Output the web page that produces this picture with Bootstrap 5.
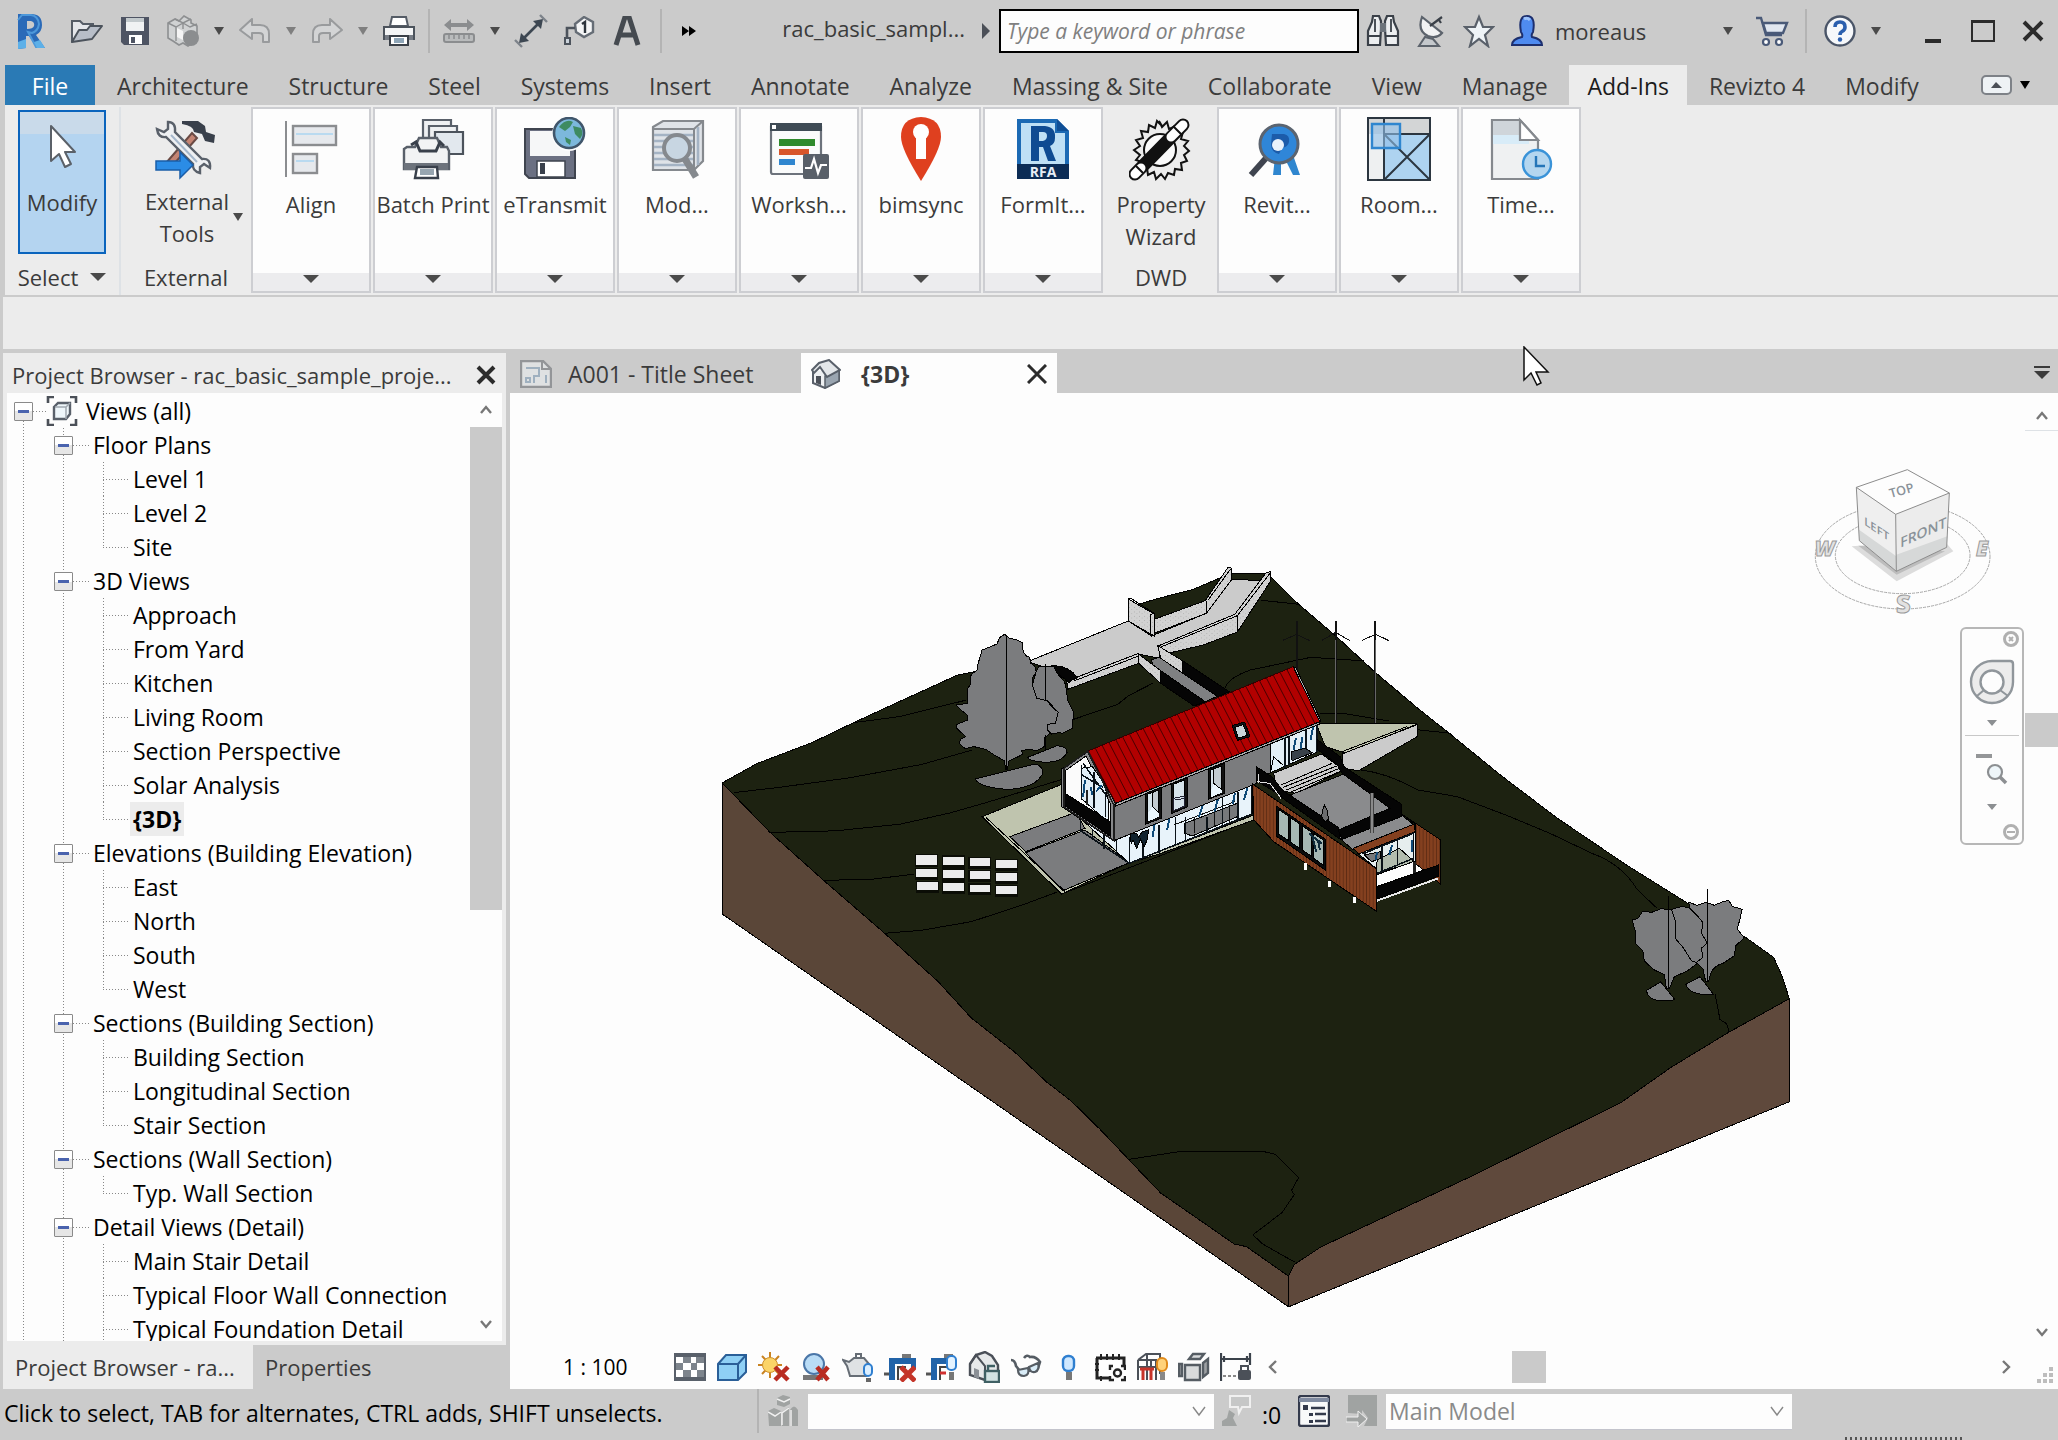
<!DOCTYPE html>
<html lang="en">
<head>
<meta charset="utf-8">
<meta name="viewport" content="width=device-width, initial-scale=1">
<title>rac_basic_sample_project - {3D}</title>
<link href="https://cdn.jsdelivr.net/npm/bootstrap@5.3.0/dist/css/bootstrap.min.css" rel="stylesheet">
<style>
:root{--chrome:#cbcbcb;--panel:#ececec;--paper:#fdfdfd;--ink:#3b3b3b;--edge:#cdced2}
body{font-family:"Open Sans","Noto Sans",sans-serif;font-size:22px;line-height:32px;color:var(--ink);background:var(--chrome)}
button{color:inherit;background:none;border:0;padding:0;font:inherit}
svg{display:block;flex:none}
.titlebar,.tabs,.ribbon,.options,.status,.bhead,.btabs,.doctabs,.vctl{flex-shrink:0}
.titlebar{height:65px;padding-bottom:4px}
.tool{width:48px;height:47px;display:flex;align-items:center;justify-content:center;flex:none}
.tool.drop{width:24px}
.tool.win{width:50px}
.rule{width:12px;height:44px;flex:none;display:flex;justify-content:center}
.rule::before{content:"";width:2px;background:#b4b4b4}
.tri{width:0;height:0;border:5px solid transparent;border-top:8px solid #4a4a4a;border-bottom:0;flex:none}
.tri.pale{border-top-color:#7f7f7f}
.tri.wide{border-width:8px 8px 0}
.docname{padding-bottom:6px}
.search{width:360px;height:44px;border:2px solid #000;border-radius:0;background:var(--paper);padding:0 6px;font-size:21px;flex:none}
.search::placeholder{font-style:italic;color:#808080;opacity:1}
.tabs{height:40px;padding-left:5px}
.tabs a{color:var(--ink);text-decoration:none;padding:0 18px;font-size:23px;line-height:42px;height:40px;white-space:nowrap}
.tabs a.file{background:#2a7ab5;color:#fff;padding:0;width:90px;text-align:center}
.tabs a.active{background:var(--panel);color:#1b1b1b}
.tabset{margin-right:44px}
.ribbon{height:190px;background:var(--panel);margin-left:5px;padding-top:2px}
.ribbon .plain{display:flex;flex-direction:column;align-items:center;padding-top:10px}
.ribbon .foot{margin-top:auto;height:32px;line-height:32px;display:flex;align-items:center;gap:12px;margin-bottom:2px}
.modbtn{width:88px;height:144px;border:2px solid #0a64bd;background:linear-gradient(#c9daea 22px,#b4d4f0 22px);display:flex;flex-direction:column;align-items:center;padding-top:12px}
.pbox{width:120px;height:186px;border:2px solid var(--edge);background:var(--paper);margin-right:2px;display:flex;flex-direction:column;align-items:center;padding-top:8px;flex:none;white-space:nowrap}
.pbox .lbl,.plain .lbl{line-height:32px;margin-top:7px;text-align:center}
.pbox .strip{margin-top:auto;height:18px;align-self:stretch;background:#ececee;display:flex;justify-content:center;padding-top:2px}
.options{height:54px;background:var(--panel);border-top:2px solid var(--chrome);margin-left:3px}
.workspace{min-height:0;padding-left:3px}
.browser{width:503px;margin:4px 4px 0 0;flex:none}
.bhead{height:40px;background:var(--panel);padding:4px 10px 0 9px}
.bbody{background:var(--panel);padding:0 4px 4px;min-height:0}
.tree{background:var(--paper);margin:0;padding:1px 0 0;color:#000;font-size:23px;line-height:34px;white-space:nowrap;overflow:hidden;
 background-image:repeating-linear-gradient(#888 0 1px,transparent 1px 3px),repeating-linear-gradient(#888 0 1px,transparent 1px 3px);
 background-size:1px 100%;background-repeat:no-repeat;background-position:16px 28px,56px 35px}
.tree ul{list-style:none;margin:0;padding:0}
.node{display:flex;align-items:center;height:34px}
.twist{width:19px;height:19px;border:1px solid #8a8a8a;border-radius:1px;background:linear-gradient(#fff 50%,#e6e6e6 50%);display:flex;align-items:center;justify-content:center;flex:none}
.twist::before{content:"";width:11px;height:3px;background:#4a63ae}
.dots{height:1px;background:repeating-linear-gradient(90deg,#888 0 1px,transparent 1px 3px);flex:none}
.grp>.node .twist{margin-left:47px}
.grp>.node .dots{width:17px;margin-right:3px}
.top>.twist{margin-left:7px}
.top>.dots{width:13px}
.leaf{height:34px;display:flex;align-items:center;background:repeating-linear-gradient(#888 0 1px,transparent 1px 3px) 96px 0/1px 100% no-repeat}
.leaf::before{content:"";width:27px;height:1px;margin-left:96px;flex:none;background:repeating-linear-gradient(90deg,#888 0 1px,transparent 1px 3px)}
.leaf span{padding:0 3px}
.leaf:last-child:not(.more){background-size:1px 50%}
.leaf.cur span{background:var(--panel);font-weight:700}
.sbar{width:32px;background:var(--paper);flex:none}
.sbar .cap{height:34px;display:flex;align-items:center;justify-content:center;flex:none}
.thumb{background:#cacaca;border:0}
.btabs{height:44px}
.btabs button{padding:0 12px;line-height:42px}
.btabs .active{background:var(--panel);width:250px;text-align:left}
.doctabs{height:44px;padding-top:4px}
.doctab{height:40px;display:flex;align-items:center;padding:2px 10px 0;font-size:23px}
.doctab.active{background:var(--paper);width:256px;font-weight:700}
.canvas{background:var(--paper);min-height:0}
.stage{min-width:0}
.stage>.model{position:absolute;inset:0;width:100%;height:100%}
.cube{position:absolute;right:31px;top:75px}
.navbox{position:absolute;right:1px;top:234px}
.vbar{width:33px;flex:none;padding-bottom:4px}
.vctl{height:48px;padding:4px 5px 0 53px;color:#000;font-size:21px}
.vctl .scale{width:111px}
.status{height:51px;color:#000;font-size:23px;padding-bottom:7px}
.status .form-select{height:35px;border:0;border-radius:0;padding:0 32px 0 3px;font-size:23px;line-height:34px;color:#8a8a8a;background-color:var(--paper);background-size:16px 12px;background-position:right 7px center;box-shadow:0 1px 0 #c3c4cc;
 background-image:url("data:image/svg+xml,%3Csvg xmlns='http://www.w3.org/2000/svg' viewBox='0 0 16 12'%3E%3Cpath d='M2 2l6 8 6-8' fill='none' stroke='%23888' stroke-width='1.4'/%3E%3C/svg%3E")}
.grip{width:118px;height:3px;background:repeating-linear-gradient(90deg,#555 0 2px,transparent 2px 5px);position:absolute;right:95px;bottom:0}
.pointer{position:absolute;left:1523px;top:346px;z-index:5}
.thin *{vector-effect:non-scaling-stroke}
</style>
</head>
<body class="vh-100 d-flex flex-column overflow-hidden position-relative">

<header class="titlebar d-flex align-items-center">
  <div class="d-flex align-items-center">
    <a href="#" class="tool ms-0" aria-label="Revit" style="width:63px"><svg width="32" height="38" viewBox="0 0 32 38"><path d="M2 2h13q11 0 11 11 0 7-6 10l9 13h-8L13 24h-3v12l-8 1z" fill="#2a6ab8"/><path d="M2 8l4-5h9q7 1 8 9-1 7-7 9l-4-1 8 15h6" fill="none" stroke="#4d98da" stroke-width="2"/><path d="M11 9h4q4 1 3 5-1 3-7 3z" fill="#cbcbcb"/><path d="M2 30l8-3v9l-8 1zM18 30l6-2 5 8h-8z" fill="#5db0e8"/></svg></a>
    <button class="tool" aria-label="Open"><svg width="34" height="28" viewBox="0 0 34 28"><path d="M2 25V4h8l3 3h10v5" fill="#e4e6ea" stroke="#555c66" stroke-width="2"/><path d="M2 25l7-12h8l3-4h12L22 22z" fill="#b8bec8" stroke="#4c535c" stroke-width="2" stroke-linejoin="round"/></svg></button>
    <button class="tool" aria-label="Save"><svg width="30" height="30" viewBox="0 0 30 30"><path d="M1 1h28v28H4l-3-3z" fill="#4e5463"/><path d="M6 2h18v13H6z" fill="#f0f2f3"/><path d="M6 2h18v4H6z" fill="#c3cacd"/><path d="M9 19h13v9H9z" fill="#fff"/><path d="M11 21h4v6h-4z" fill="#4e5463"/></svg></button>
    <button class="tool" aria-label="Synchronize"><svg width="34" height="34" viewBox="0 0 34 34"><path d="M2 9l7-4 4 2 5-5 7 4v3l6 3v14l-9 6-5-3-4 2-6-4-5-3z" fill="#d0d2d3" stroke="#8d8f91" stroke-width="1.600"/><path d="M2 9l8 4 7-4 7 4 7-3M10 13v14M17 9v6M9 5l8 4 8-4" fill="none" stroke="#8d8f91" stroke-width="1.400"/><path d="M11 14l6 3v9l-6-3z" fill="#f4f4f4"/><circle cx="25" cy="24" r="8" fill="#8b8d8f"/></svg></button>
    <button class="tool drop" aria-label="Sync options"><i class="tri"></i></button>
    <button class="tool" aria-label="Undo"><svg width="32" height="26" viewBox="0 0 32 26"><path d="M1 12L13 1v6h8q9 0 9 9v8h-6v-6q0-3-4-3h-7v6z" fill="#d3d4d5" stroke="#999b9d" stroke-width="2" stroke-linejoin="round"/></svg></button>
    <button class="tool drop" aria-label="Undo list"><i class="tri pale"></i></button>
    <button class="tool" aria-label="Redo"><svg width="32" height="26" viewBox="0 0 32 26"><path d="M31 12L19 1v6h-8q-9 0-9 9v8h6v-6q0-3 4-3h7v6z" fill="#d3d4d5" stroke="#999b9d" stroke-width="2" stroke-linejoin="round"/></svg></button>
    <button class="tool drop" aria-label="Redo list"><i class="tri pale"></i></button>
    <button class="tool" aria-label="Print"><svg width="34" height="32" viewBox="0 0 34 32"><path d="M8 11l2-9h14l2 9z" fill="#fff" stroke="#555c66" stroke-width="2"/><path d="M2 12h30v12H2z" fill="#f4f5f6" stroke="#4c535c" stroke-width="2"/><path d="M3 20h28v5H3z" fill="#777d86"/><path d="M8 21h18v9H8z" fill="#fff" stroke="#3a4048" stroke-width="2"/><path d="M12 23h10v5H12z" fill="#8fa6b8"/></svg></button>
    <span class="rule"></span>
    <button class="tool" aria-label="Measure"><svg width="34" height="26" viewBox="0 0 34 26"><path d="M2 7l7-6v4h16V1l7 6-7 6V9H9v4z" fill="#8b8d8f"/><rect x="2" y="16" width="30" height="8" rx="2" fill="#b9bbbc" stroke="#8b8d8f" stroke-width="2"/><path d="M7 17v4M12 17v4M17 17v4M22 17v4M27 17v4" stroke="#8b8d8f" stroke-width="1.500"/></svg></button>
    <button class="tool drop" aria-label="Measure options"><i class="tri"></i></button>
    <button class="tool" aria-label="Aligned dimension"><svg width="34" height="34" viewBox="0 0 34 34"><path d="M8 26L26 8" stroke="#3d4752" stroke-width="2.600"/><path d="M5 29l2-10 8 8zM29 5l-2 10-8-8z" fill="#3d4752"/><path d="M1 26l7 7M26 1l7 7" stroke="#7d838a" stroke-width="2.400"/></svg></button>
    <button class="tool" aria-label="Tag by category"><svg width="32" height="30" viewBox="0 0 32 30"><path d="M12 8l9-7 9 5v10l-9 5-8-5z" fill="#f4f5f6" stroke="#666d76" stroke-width="2.400"/><path d="M12 12H4v11" fill="none" stroke="#4c535c" stroke-width="2.600"/><rect x="2" y="22" width="5" height="6" fill="#cbd3db" stroke="#4c535c" stroke-width="2"/><path d="M19 8l3-2v11" fill="none" stroke="#2d343c" stroke-width="2.400"/></svg></button>
    <button class="tool" aria-label="Text"><svg width="28" height="30" viewBox="0 0 28 30"><path d="M3 29L12 1h4l9 28M7 19h14" fill="none" stroke="#454a50" stroke-width="5"/></svg></button>
    <span class="rule ms-1 me-1"></span>
    <button class="tool" aria-label="More tools" style="width:36px"><svg width="16" height="12" viewBox="0 0 16 12"><path d="M1 1l7 5-7 5zM8 1l7 5-7 5z" fill="#000"/></svg></button>
  </div>
  <div class="flex-grow-1 d-flex align-items-center justify-content-end gap-3 pe-2 text-nowrap">
    <span class="docname">rac_basic_sampl...</span>
    <svg width="10" height="18" viewBox="0 0 10 18"><path d="M1 1l8 8-8 8z" fill="#4b4f57"/></svg>
  </div>
  <input class="search" type="search" placeholder="Type a keyword or phrase" aria-label="Search help">
  <div class="d-flex align-items-center">
    <button class="tool" aria-label="Find"><svg width="34" height="34" viewBox="0 0 34 34"><path d="M7 2h6l2 5v8l-1 16H2V17L6 8zM21 2h6l1 6 4 9v14H20l-1-16V7z" fill="#eceef0" stroke="#3a4048" stroke-width="2.200"/><path d="M14 9h6v9h-6z" fill="#6c737b"/><path d="M2 22h12M20 22h12M9 5v13M25 5v13" stroke="#3a4048" stroke-width="1.800"/></svg></button>
    <button class="tool" aria-label="Communication"><svg width="30" height="34" viewBox="0 0 30 34"><path d="M6 3q-5 14 6 19 9 3 14-3z" fill="#f1f2f3" stroke="#5c636c" stroke-width="2.200"/><path d="M14 12L26 3M23 6l2 3" stroke="#3a4048" stroke-width="2.200"/><path d="M3 32l6-9 8 2 6 7z" fill="#c4c8cc" stroke="#5c636c" stroke-width="2"/></svg></button>
    <button class="tool" aria-label="Favorites"><svg width="32" height="34" viewBox="0 0 32 34"><path d="M16 3l4 10h10l-8 8 3 11-9-7-9 7 3-11-8-8h10z" fill="#eef3f7" stroke="#59606a" stroke-width="2.200"/></svg></button>
    <button class="tool" aria-label="Account"><svg width="34" height="34" viewBox="0 0 34 34"><path d="M2 31q0-6 10-8 1-2-1-5-3-16 6-16t6 16q-2 3-1 5 10 2 10 8z" fill="#4f8bf0" stroke="#1d2f6e" stroke-width="2"/><path d="M14 5q3-2 6 1" stroke="#9dc3fb" stroke-width="3" fill="none"/></svg></button>
    <button class="d-flex align-items-center" style="width:189px"><span class="flex-grow-1 text-start ps-1">moreaus</span><span class="tool drop"><i class="tri"></i></span></button>
    <button class="tool ms-2" aria-label="App Store"><svg width="34" height="34" viewBox="0 0 34 34"><path d="M1 4h5l5 17h16" fill="none" stroke="#4a5a78" stroke-width="2.400"/><path d="M8 9h24l-4 10H11z" fill="#e1e7f0" stroke="#4a5a78" stroke-width="2.400"/><circle cx="11" cy="28" r="3" fill="#fff" stroke="#4a5a78" stroke-width="2.200"/><circle cx="24" cy="28" r="3" fill="#fff" stroke="#4a5a78" stroke-width="2.200"/></svg></button>
    <span class="rule ms-1"></span>
    <button class="tool ms-1" aria-label="Help"><svg width="34" height="34" viewBox="0 0 34 34"><circle cx="17" cy="17" r="14.500" fill="#f6f8fb" stroke="#4a5568" stroke-width="2.400"/><path d="M12 13q0-5 5-5t5 5q0 3-3 4.500-2 1-2 3.500" fill="none" stroke="#2b5fae" stroke-width="3.600"/><circle cx="17" cy="25.500" r="2.200" fill="#2b5fae"/></svg></button>
    <button class="tool drop me-1" aria-label="Help options"><i class="tri"></i></button>
    <button class="tool win ms-3" aria-label="Minimize"><svg width="16" height="30" viewBox="0 0 16 30"><path d="M0 23h16v4H0z" fill="#2b2b2b"/></svg></button>
    <button class="tool win" aria-label="Maximize"><svg width="24" height="24" viewBox="0 0 24 24"><path d="M1 2h22v20H1z" fill="none" stroke="#2b2b2b" stroke-width="2"/><path d="M0 1h24v3H0z" fill="#2b2b2b"/></svg></button>
    <button class="tool win" aria-label="Close"><svg width="22" height="22" viewBox="0 0 22 22"><path d="M2 2l18 18M20 2L2 20" stroke="#2b2b2b" stroke-width="4"/></svg></button>
  </div>
</header>

<nav class="tabs d-flex justify-content-between">
  <div class="tabset d-flex flex-grow-1">
    <a href="#" class="file">File</a>
    <div class="flex-grow-1 d-flex justify-content-between ps-1">
      <a href="#">Architecture</a><a href="#">Structure</a><a href="#">Steel</a><a href="#">Systems</a><a href="#">Insert</a><a href="#">Annotate</a><a href="#">Analyze</a><a href="#">Massing &amp; Site</a><a href="#">Collaborate</a><a href="#">View</a><a href="#">Manage</a><a href="#" class="active">Add-Ins</a><a href="#">Revizto 4</a><a href="#">Modify</a>
    </div>
  </div>
  <button class="d-flex align-items-center gap-2 pe-4 me-1" aria-label="Ribbon display"><svg width="31" height="20" viewBox="0 0 31 20"><rect x="1" y="1" width="29" height="18" rx="4" fill="#eef2f5" stroke="#7d8187" stroke-width="2"/><path d="M10 13l5-6 6 6z" fill="#4b4f57"/></svg><i class="tri" style="border-top-color:#000"></i></button>
</nav>

<section class="ribbon d-flex">
  <div class="plain" style="width:114px;padding-top:3px">
    <button class="modbtn"><svg width="64" height="46" viewBox="0 0 64 46"><path d="M21 2v35l8-7 6 13 6-3-6-12h10z" fill="#fff" stroke="#5b6169" stroke-width="2" stroke-linejoin="round"/></svg><span class="lbl mt-3">Modify</span></button>
    <button class="foot">Select <i class="tri wide"></i></button>
  </div>
  <div class="plain border-start border-2" style="width:132px">
    <svg width="64" height="64" viewBox="0 0 64 64"><path d="M12 46L38 16l5 5-24 27z" fill="#c48473" stroke="#6a4a44" stroke-width="2"/><path d="M28 4h16l7 5 1 6 9 3-1 8-9-2-3-7-8-2q0-6-12-8z" fill="#39404b"/><path d="M3 12l7 3 4-3V5q8 0 7 10l27 27q9-1 8 9l-6-4-4 3v6q-8-2-7-9L12 20q-8 1-9-8z" fill="#eef0f3" stroke="#59606a" stroke-width="2.400"/><path d="M17 18l26 27" stroke="#a6b8cc" stroke-width="2"/><path d="M2 44h24v-9l13 13-13 13v-8H2z" fill="#2b8ce6" stroke="#1a5da8" stroke-width="1.500"/></svg>
    <div class="d-flex align-items-center gap-1"><span class="lbl mt-1 ps-2 ms-2">External<br>Tools</span><i class="tri mt-1"></i></div>
    <div class="foot">External</div>
  </div>
  <button class="pbox"><svg width="64" height="64" viewBox="0 0 64 64"><path d="M7 4v56" stroke="#8b8d90" stroke-width="2"/><rect x="14" y="9" width="43" height="19" fill="#e6e9ed" stroke="#8b8d90" stroke-width="2.400"/><path d="M17 17h37" stroke="#b9daf0" stroke-width="2"/><rect x="14" y="37" width="24" height="19" fill="#e6e9ed" stroke="#8b8d90" stroke-width="2.400"/><path d="M17 44h18" stroke="#b9daf0" stroke-width="2"/></svg><span class="lbl">Align</span><span class="strip"><i class="tri wide"></i></span></button>
  <button class="pbox"><svg width="64" height="64" viewBox="0 0 64 64"><path d="M22 3h28v20H22z" fill="#eef0f2" stroke="#59606a" stroke-width="2.200"/><path d="M28 9h28v22H28z" fill="#eef0f2" stroke="#59606a" stroke-width="2.200"/><path d="M34 15h28v22H34z" fill="#e2e8ee" stroke="#4c535c" stroke-width="2.200"/><path d="M3 32l3-2h8l4-9h18l4 9h6l2 4v18H3z" fill="#f2f3f4" stroke="#59606a" stroke-width="2.400"/><path d="M10 28l5-3 4 9h16l4-9 4 4" fill="none" stroke="#39404b" stroke-width="3"/><path d="M3 46h44v7H3z" fill="#6d737c"/><path d="M16 50h20l1 11H14z" fill="#fff" stroke="#39404b" stroke-width="2.400"/><path d="M19 52h14v6H19z" fill="#97a5b0"/></svg><span class="lbl">Batch Print</span><span class="strip"><i class="tri wide"></i></span></button>
  <button class="pbox"><svg width="64" height="64" viewBox="0 0 64 64"><path d="M2 12h50v49H6l-4-4z" fill="#6b7082" stroke="#3f444f" stroke-width="2"/><path d="M7 14h40v25H7z" fill="#f6f7f8"/><path d="M14 44h28v16H14z" fill="#fff" stroke="#3f444f" stroke-width="1.500"/><path d="M17 46h5v11h-5z" fill="#39404b"/><circle cx="46" cy="17" r="17" fill="#fdfdfd"/><circle cx="46" cy="16" r="15" fill="#7cb8dc" stroke="#40566b" stroke-width="2.600"/><path d="M36 10q7-9 14-5l-3 5-5 4zM50 9l8 2q3 6-1 11l-5-5zM42 20l6 3-1 5-4-3z" fill="#3e8b62"/></svg><span class="lbl">eTransmit</span><span class="strip"><i class="tri wide"></i></span></button>
  <button class="pbox"><svg width="64" height="64" viewBox="0 0 64 64"><path d="M8 10l10-6h40v40l-9 9H8z" fill="#dfe3e8" stroke="#85898e" stroke-width="2.200"/><path d="M8 12h41v40M49 12l9-8" fill="none" stroke="#85898e" stroke-width="2"/><path d="M9 18h39M9 24h39M9 30h39M9 36h39M9 42h39M9 48h39M53 10v38" stroke="#a4b3c4" stroke-width="2.600"/><circle cx="32" cy="31" r="13" fill="#c8d6e2" stroke="#85898e" stroke-width="4"/><path d="M40 42l11 18" stroke="#85898e" stroke-width="7"/></svg><span class="lbl">Mod...</span><span class="strip"><i class="tri wide"></i></span></button>
  <button class="pbox"><svg width="64" height="64" viewBox="0 0 64 64"><rect x="4" y="7" width="50" height="50" rx="2" fill="#fafbfb" stroke="#6d737c" stroke-width="2.200"/><path d="M3 6h52v8H3z" fill="#3f4b55"/><path d="M5 8h4v4H5z" fill="#fff"/><path d="M12 22h36v7H12z" fill="#2f8a2c"/><path d="M12 32h30v6H12z" fill="#d8562b"/><path d="M12 42h16v6H12z" fill="#2f86cf"/><rect x="36" y="37" width="26" height="25" rx="2" fill="#596069"/><path d="M38 51h6l3-9 4 14 3-8h6" fill="none" stroke="#fff" stroke-width="2.200"/></svg><span class="lbl">Worksh...</span><span class="strip"><i class="tri wide"></i></span></button>
  <button class="pbox"><svg width="64" height="64" viewBox="0 0 64 64"><path d="M32 0q20 1 20 20 0 12-20 44Q12 32 12 20 12 1 32 0z" fill="#df401f"/><circle cx="32" cy="15" r="8" fill="#fff"/><path d="M27 17h10v25H27z" fill="#fff"/></svg><span class="lbl">bimsync</span><span class="strip"><i class="tri wide"></i></span></button>
  <button class="pbox"><svg width="64" height="64" viewBox="0 0 64 64"><path d="M6 2h40l12 12v48H6z" fill="#1c6ab4"/><path d="M10 6h34v10h10v31H10z" fill="#bfe0f5"/><path d="M46 2l12 12H46z" fill="#0f4f96"/><path d="M20 9h14q11 1 10 12 0 6-5 8l6 15h-8l-5-14h-4v14h-8zM28 15v9h4q4-1 4-5t-4-4z" fill="#0f4b92" fill-rule="evenodd"/><path d="M6 47h52v15H6z" fill="#0c2c55"/><text x="32" y="60" text-anchor="middle" font-size="14" font-weight="700" fill="#e7eef6">RFA</text></svg><span class="lbl">FormIt...</span><span class="strip"><i class="tri wide"></i></span></button>
  <div class="plain" style="width:112px">
    <svg width="64" height="64" viewBox="0 0 64 64"><path d="M30 4l3 6 5-5 2 7 7-3v7l7-1-2 7 7 2-4 5 5 5-5 4 3 6-6 2 1 7-7-1-1 6-6-2-3 6-4-5-5 5-2-7-6 3-1-7-7 1 2-7-6-2 4-5-6-5 6-4-4-6 7-2-2-7 7 1 1-7 6 3 2-7 5 5z" fill="#ececec" stroke="#111" stroke-width="2"/><circle cx="31" cy="33" r="16" fill="#fafafa" stroke="#111" stroke-width="2"/><path d="M6 57L54 8" stroke="#111" stroke-width="13" stroke-linecap="round"/><path d="M6 57l6-6M42 20L54 8" stroke="#fff" stroke-width="9" stroke-linecap="round"/><path d="M44 9l9 9M7 49l7 7" stroke="#111" stroke-width="2"/></svg>
    <span class="lbl">Property<br>Wizard</span>
    <div class="foot">DWD</div>
  </div>
  <button class="pbox"><svg width="64" height="64" viewBox="0 0 64 64"><path d="M22 40L6 58" stroke="#3f444f" stroke-width="6"/><path d="M30 40l-2 18h8V42zM40 42l8 16h7L48 38z" fill="#2f86cf"/><circle cx="34" cy="27" r="19" fill="#2f86d8" stroke="#5b6470" stroke-width="3"/><path d="M27 17h12q6 1 5 8-1 5-7 6l-3 6q-8-2-8-10z" fill="#1c5caa"/><circle cx="33" cy="28" r="6" fill="#e8f2fb"/></svg><span class="lbl">Revit...</span><span class="strip"><i class="tri wide"></i></span></button>
  <button class="pbox"><svg width="64" height="64" viewBox="0 0 64 64"><path d="M1 1h62v62H1z" fill="#eef0f1"/><path d="M1 1h62v16H1z" fill="#d3d5d6"/><path d="M17 17h46v46H17z" fill="#aed3f0"/><path d="M1 1h62v62H1zM17 1v62M17 17h46L17 63M17 17l46 46" fill="none" stroke="#2c3640" stroke-width="2"/><path d="M5 7h28v24H5z" fill="#8fc0ea99" stroke="#2f86cf" stroke-width="2.400"/></svg><span class="lbl">Room...</span><span class="strip"><i class="tri wide"></i></span></button>
  <button class="pbox"><svg width="64" height="64" viewBox="0 0 64 64"><path d="M3 3h28l18 20v39H3z" fill="#eff1f2" stroke="#85898e" stroke-width="2.200"/><path d="M4 4h27v14H4z" fill="#cfd5da"/><path d="M4 18h36v9H4z" fill="#d8ecf8"/><path d="M31 3v20h18z" fill="#fff" stroke="#85898e" stroke-width="2.200"/><circle cx="48" cy="47" r="14" fill="#b4d6ef" stroke="#3a93d8" stroke-width="2.400"/><path d="M47 39v10h9" fill="none" stroke="#2475b8" stroke-width="2.400"/></svg><span class="lbl">Time...</span><span class="strip"><i class="tri wide"></i></span></button>
</section>
<div class="options"></div>

<main class="workspace flex-grow-1 d-flex">
  <aside class="browser d-flex flex-column">
    <div class="bhead d-flex align-items-center justify-content-between text-nowrap"><span>Project Browser - rac_basic_sample_proje...</span><button aria-label="Close browser"><svg width="20" height="20" viewBox="0 0 20 20"><path d="M2 2l16 16M18 2L2 18" stroke="#2b2b2b" stroke-width="4"/></svg></button></div>
    <div class="bbody flex-grow-1 d-flex overflow-hidden">
      <ul class="tree list-unstyled flex-grow-1">
        <li>
          <div class="node top"><button class="twist" aria-label="Collapse"></button><i class="dots"></i><svg class="me-2" width="32" height="30" viewBox="0 0 32 30"><path d="M2 7V1h6M24 1h6v6M2 23v6h6M24 29h6v-6" fill="none" stroke="#4b5058" stroke-width="2.600"/><path d="M8 11l4-4h12v11l-4 5H8z" fill="#eef6fa" stroke="#59606a" stroke-width="2.400"/><path d="M20 11v12M9 11h11l4-4" fill="none" stroke="#a0a8b0" stroke-width="1.500"/></svg><span>Views (all)</span></div>
          <ul>
            <li class="grp"><div class="node"><button class="twist" aria-label="Collapse"></button><i class="dots"></i><span>Floor Plans</span></div>
              <ul><li class="leaf"><span>Level 1</span></li><li class="leaf"><span>Level 2</span></li><li class="leaf"><span>Site</span></li></ul></li>
            <li class="grp"><div class="node"><button class="twist" aria-label="Collapse"></button><i class="dots"></i><span>3D Views</span></div>
              <ul><li class="leaf"><span>Approach</span></li><li class="leaf"><span>From Yard</span></li><li class="leaf"><span>Kitchen</span></li><li class="leaf"><span>Living Room</span></li><li class="leaf"><span>Section Perspective</span></li><li class="leaf"><span>Solar Analysis</span></li><li class="leaf cur"><span>{3D}</span></li></ul></li>
            <li class="grp"><div class="node"><button class="twist" aria-label="Collapse"></button><i class="dots"></i><span>Elevations (Building Elevation)</span></div>
              <ul><li class="leaf"><span>East</span></li><li class="leaf"><span>North</span></li><li class="leaf"><span>South</span></li><li class="leaf"><span>West</span></li></ul></li>
            <li class="grp"><div class="node"><button class="twist" aria-label="Collapse"></button><i class="dots"></i><span>Sections (Building Section)</span></div>
              <ul><li class="leaf"><span>Building Section</span></li><li class="leaf"><span>Longitudinal Section</span></li><li class="leaf"><span>Stair Section</span></li></ul></li>
            <li class="grp"><div class="node"><button class="twist" aria-label="Collapse"></button><i class="dots"></i><span>Sections (Wall Section)</span></div>
              <ul><li class="leaf"><span>Typ. Wall Section</span></li></ul></li>
            <li class="grp"><div class="node"><button class="twist" aria-label="Collapse"></button><i class="dots"></i><span>Detail Views (Detail)</span></div>
              <ul><li class="leaf"><span>Main Stair Detail</span></li><li class="leaf"><span>Typical Floor Wall Connection</span></li><li class="leaf more"><span>Typical Foundation Detail</span></li></ul></li>
          </ul>
        </li>
      </ul>
      <div class="sbar d-flex flex-column">
        <span class="cap"><svg width="12" height="10" viewBox="0 0 12 10"><path d="M1 8l5-6 5 6" fill="none" stroke="#777" stroke-width="2.400"/></svg></span>
        <div class="thumb" style="height:51%"></div>
        <span class="cap mt-auto"><svg width="12" height="10" viewBox="0 0 12 10"><path d="M1 2l5 6 5-6" fill="none" stroke="#777" stroke-width="2.400"/></svg></span>
      </div>
    </div>
    <div class="btabs d-flex text-nowrap"><button class="active">Project Browser - ra...</button><button>Properties</button></div>
  </aside>

  <section class="flex-grow-1 d-flex flex-column stage">
    <div class="doctabs d-flex align-items-center">
      <button class="doctab text-nowrap" style="width:291px"><svg width="32" height="28" viewBox="0 0 32 28"><path d="M1 1h22l8 8v18H1z" fill="#dfe1e2" stroke="#939598" stroke-width="2.400"/><path d="M6 8h13v8h-5v7M6 18h4v4H6zM26 15v8" fill="none" stroke="#9fb0bf" stroke-width="2"/><path d="M22 1v8h9" fill="none" stroke="#939598" stroke-width="2"/></svg><span class="ps-3">A001 - Title Sheet</span></button>
      <button class="doctab active"><svg width="30" height="30" viewBox="0 0 30 30"><path d="M2 12v12l12 5 14-7V11" fill="#eef0f2" stroke="#59606a" stroke-width="2"/><path d="M14 29V17l14-6v11z" fill="#9aa5b0" stroke="#59606a" stroke-width="1.500"/><path d="M1 11L8 4l10-3 11 10-13 7-7-10-6 6z" fill="#e3e6e9" stroke="#59606a" stroke-width="2"/><path d="M5 17h5v9l-5-2z" fill="#4b5058"/></svg><span class="ps-3 ms-1 flex-grow-1 text-start">{3D}</span><svg width="20" height="20" viewBox="0 0 20 20"><path d="M1 1l18 18M19 1L1 19" stroke="#2b2b2b" stroke-width="3"/></svg></button>
      <button class="ms-auto pe-2" aria-label="Tab list"><svg width="16" height="14" viewBox="0 0 16 14"><path d="M0 0h16v2H0zM0 5h16l-8 8z" fill="#3b3b3b"/></svg></button>
    </div>
    <div class="canvas flex-grow-1 d-flex flex-column">
      <div class="flex-grow-1 d-flex">
        <div class="flex-grow-1 position-relative stage">
<svg class="model thin" viewBox="510 393 1515 948" preserveAspectRatio="xMidYMid meet" shape-rendering="crispEdges" role="img" aria-label="3D site model">
  <defs>
    <pattern id="seam" patternUnits="userSpaceOnUse" width="1" height="1" patternTransform="matrix(18.500 -8.430 75 160 508 603)"><rect width="1" height="1" fill="#b20000"/><rect width=".1" height="1" fill="#4a0000"/></pattern>
    <pattern id="wood" patternUnits="userSpaceOnUse" width="9" height="9"><rect width="9" height="9" fill="#84401f"/><rect width="2" height="9" fill="#5f2c14"/></pattern>
    <pattern id="rail" patternUnits="userSpaceOnUse" width="11" height="11"><rect width="11" height="11" fill="#050505"/><rect x="3" y="2" width="3" height="2" fill="#b9b9b9"/><rect x="8" y="7" width="3" height="2" fill="#888"/></pattern>
    <pattern id="grit" patternUnits="userSpaceOnUse" width="14" height="13"><rect width="14" height="13" fill="#d2d2d2"/><rect x="3" y="2" width="2" height="2" fill="#a8a8a8"/><rect x="10" y="8" width="2" height="2" fill="#b2b2b2"/></pattern>
  </defs>
  <!-- site mass -->
  <g transform="translate(700 540) scale(.7143 .5102)" stroke="#000" stroke-width="1" fill="none">
    <path d="M31 476L98 573 173 667 257 769 333 865 380 937 440 1003 485 1062 520 1100 560 1155 600 1214 645 1280 748 1380 765 1385 824 1443V1503L31 733z" fill="#5a4638"/>
    <path d="M824 1443L832 1420 870 1385 1080 1247 1289 1103 1360 1033 1440 965 1525 899V1101L824 1503z" fill="#5f493c"/>
    <path d="M31 476L80 438 157 397 215 358 280 316 360 265 465 235 600 160 605 130 640 115 690 97 742 66 795 66 835 122 890 188 945 259 1005 330 1050 380 1120 460 1200 545 1296 636 1385 714 1465 780 1503 818 1515 855 1525 899 1440 965 1360 1033 1289 1103 1080 1247 870 1385 832 1420 824 1443 765 1385 748 1380 645 1280 600 1214 560 1155 520 1100 485 1062 440 1003 380 937 333 865 257 769 173 667 98 573z" fill="#1d2211"/>
    <path d="M215 358L280 346 372 314M48 495L110 485 210 466 310 440 380 412M100 573L190 570 280 557 350 535 400 515 505 470M175 667L240 665 300 655M257 771L310 765 380 748 450 716 500 690M522 352L585 322 600 305 635 280M735 290Q740 270 770 255L855 230 930 237M785 118L838 126M868 340L905 341 965 355M1005 372L1052 379M920 450Q960 455 1005 490L1060 503 1130 540 1190 575 1250 615Q1290 635 1312 685L1340 722M600 1214L675 1198 790 1199 805 1204 838 1250 828 1275 832 1283 815 1318 774 1362 788 1380 832 1415M1421 890L1428 940 1437 948 1441 965"/>
    <path d="M1305 745L1313 742 1320 727 1332 730 1345 723 1360 724 1375 718 1386 722 1384 710 1396 716 1408 710 1420 716 1430 710 1440 706 1445 718 1459 724 1455 748 1452 762 1462 780 1450 795 1448 815 1432 830Q1415 835 1412 866H1408L1404 840 1396 830 1382 845 1364 856 1357 880H1353L1350 852 1335 842 1322 825 1320 805 1309 790 1310 770z" fill="#7b7c7e"/>
    <path d="M1360 724L1366 750 1365 780 1377 800 1388 825 1395 828 1404 818 1402 800 1410 790 1402 770 1404 750 1396 736 1386 722M1356 698V880M1411 684V866" />
    <path d="M1325 883L1345 866 1365 901Q1328 910 1325 883zM1380 871L1400 856 1419 891Q1385 893 1380 871z" fill="#7b7c7e"/>
  </g>
  <!-- paths, buildings and trees -->
  <g transform="translate(900 550) scale(.3699 .33333)" stroke="#000" stroke-width="1" fill="none">
    <path d="M345 335L617 213 680 258 828 190 897 88 985 92 905 193 705 287 700 325 645 312 453 405 440 370z" fill="#cbcbcb"/>
    <path d="M617 147L687 192V258L617 213z" fill="url(#grit)"/><path d="M617 147L624 145 687 190 677 194V256"/>
    <path d="M687 208L825 152 887 52 897 55V88L828 190 687 250z" fill="url(#grit)"/><path d="M828 152V190M833 150L893 58"/>
    <path d="M700 287L905 193 990 68 1001 65V95L912 246 820 285 705 315z" fill="url(#grit)"/><path d="M705 291L912 197 1000 70M912 197V246"/>
    <path d="M475 383L645 310V340L453 418V400z" fill="url(#grit)"/><path d="M470 393L645 318"/>
    <path d="M680 330L700 322 885 425 800 468 690 370z" fill="#7f8082"/>
    <path d="M645 312L705 362V400L645 340zM697 287L765 333V370L705 325z" fill="url(#grit)"/>
    <path d="M765 333L890 425 860 440 765 370zM705 362L825 455 795 468 705 400z" fill="url(#rail)"/>
    <path d="M410 347Q455 345 480 383L455 395 425 370z" fill="url(#rail)"/>
    <!-- trees -->
    <path d="M283 253L297 266 312 268 330 278 333 305 342 318 350 322 354 340 364 348 368 365 358 385 360 405 370 415 370 445 398 452 410 470 428 487 424 505 420 522 398 525 400 540 405 550 390 565 390 590 370 602 350 598 328 602 332 612 320 620 295 632 290 660H286L282 632 255 615 232 598 200 590 176 596 160 580 164 568 177 560 166 548 153 535 152 524 165 518 184 510 182 495 165 480 152 465 182 460 183 415 190 405 190 380 198 368 208 362 210 345 222 300 245 290 262 282 270 262z" fill="#7b7c7e"/>
    <path d="M375 350L415 348 425 370 445 395 450 420 453 450 469 485 466 535 440 550 430 548 410 552 398 540 400 523 420 520 428 487 398 452 370 445 358 405 368 365z" fill="#7b7c7e"/>
    <path d="M288 256V660M393 342V452M393 555V605" stroke-width="1.500"/>
    <path d="M203 687L365 642Q390 650 385 672 365 716 288 718 215 712 203 687zM345 622L425 587Q452 590 452 607 440 635 400 637 350 635 345 622z" fill="#7b7c7e"/>
    <!-- turbines -->
    <path d="M1072 213V365M1178 213V522M1285 213V522" stroke="#111" stroke-width="2"/><path d="M1035 271L1072 253 1108 272M1141 271L1178 247 1216 272M1249 271L1286 253 1322 272" stroke="#111"/>
    <path d="M1178 270V522M1285 270V522" stroke="#666"/>
    <!-- triangular terrace -->
    <path d="M1125 522H1398L1205 610 1150 590z" fill="#bfc4ae"/><path d="M1398 524V560L1240 662 1195 655V612z" fill="#cbcbcb"/><path d="M1370 530L1195 605"/>
    <!-- lawn and patio -->
    <path d="M222 800L437 703 620 938 437 1032z" fill="#bfc4ae"/>
    <path d="M297 860L475 787 500 835 340 905z" fill="#7b7c7e"/><path d="M340 908L500 840 620 938 440 1022z" fill="#7b7c7e"/>
    <path d="M232 802L446 1024M437 1032L957 808V795L620 938"/>
    <path d="M618 940L957 795V810L700 912z" fill="#bfc4ae"/>
    <!-- house -->
    <path d="M488 805L620 940 952 792V700L660 800z" fill="#e8f3fa"/>
    <path d="M770 820L912 760V800L790 858 770 850z" fill="#77797b"/>
    <path d="M488 808V842M520 840V870M552 850V898M585 870V915M620 860V940M657 845V925M700 825V908M745 800V887M772 800V875M830 800V848M872 740V830M914 725V812M950 705V795M488 842L620 940 952 792" stroke="#0a1218" stroke-width="1.500"/>
    <path d="M740 825L905 755M795 800V850M850 780V832M890 765V818" stroke="#111"/>
    <path d="M690 810L683 860M730 795L722 840M820 760L808 800M860 745L850 785M940 710L930 750M905 730L900 762" stroke="#0f4a78" stroke-width="2"/>
    <path d="M622 852L640 850 645 862 655 845 672 840 668 870 660 890 650 868 640 895 630 870 625 880z" fill="#10222e"/>
    <path d="M437 657L508 605 583 762 578 872 437 770z" fill="#88898b"/>
    <path d="M447 662L503 618 570 765V835L447 735z" fill="#fbfbfb"/>
    <path d="M490 655L520 650 552 700 565 760V820L490 745z" fill="#e2eff7"/>
    <path d="M490 645V750M524 665V775M556 725V800M492 675L548 712M495 640L560 740" stroke="#0a1218" stroke-width="1.500"/><path d="M500 690L495 740M545 705L530 725M515 710L520 735" stroke="#0f4a78" stroke-width="2"/>
    <path d="M505 720V765" stroke="#222" stroke-width="2"/>
    <path d="M443 728L568 815V858L443 765z" fill="url(#rail)"/>
    <path d="M578 765L1002 575V668L965 690V700L578 872z" fill="#7b7c7e"/>
    <path d="M1002 572L1130 515V605L1002 668z" fill="#e3eff6"/>
    <path d="M508 603L1063 350 1135 515 583 760z" fill="url(#seam)" stroke="#300"/>
    <path d="M583 760L1135 515V522L583 768z" fill="#a9aaac"/><path d="M1063 350L1070 353 1138 512 1135 515z" fill="#a9aaac"/>
    <path d="M508 603L443 655V770L578 872V765L508 605" stroke="#1c1c1c" stroke-width="1.500"/>
    <path d="M898 527L932 516 946 560 912 571z" fill="#101418"/><path d="M905 532L928 524 939 556 915 564z" fill="#c9d5da"/>
    <path d="M665 730L706 712V805L665 822zM735 700L778 683V770L735 790zM835 657L877 640V730L835 747z" fill="#111"/>
    <path d="M670 732L700 720V800L670 815zM740 702L770 690V768L740 782zM840 660L870 648V728L840 742z" fill="#d6e3ea"/>
    <path d="M683 727L700 720V790L683 770zM848 657L870 648V720L848 700z" fill="#c2cbd0"/><path d="M670 790L683 770 700 790V800L670 815zM840 722L848 702 870 720V728L840 742z" fill="#eaf6fd" stroke="none"/>
    <path d="M740 745L770 738V768L740 782zM745 750L768 745" stroke="#223"/>
    <path d="M1040 565V655M1052 560V645M1098 540V620M1128 525V605" stroke="#0a1218" stroke-width="2"/><path d="M1070 565L1064 600M1088 560L1080 615M1117 530L1110 570" stroke="#0f4a78" stroke-width="2"/><path d="M1003 660L1010 620 1035 645" /><path d="M1058 605L1095 595 1115 608 1060 632z" fill="#39424a"/>
    <!-- annex -->
    <path d="M1010 670L1140 612 1200 660 1070 730 1020 720z" fill="#cbcbcb"/>
    <path d="M1030 705L1168 640M1036 712L1180 648M1045 720L1188 655M1055 727L1195 662" />
    <path d="M1055 735L1200 672 1355 780 1350 790 1390 825 1225 900z" fill="#8a8b8d"/>
    <path d="M1130 570L1190 620 1200 650 1355 762V800L1195 868 1185 840 1325 775 1195 670 1180 640 1130 600z" fill="url(#rail)"/>
    <path d="M963 650L1005 680 1035 722 1185 832 1190 868 1035 745 1020 730 963 692z" fill="url(#rail)"/>
    <path d="M965 695L1000 700 1030 745M970 672V700" stroke="#ddd"/>
    <path d="M953 702L1287 955 1287 1083 1010 875 957 810z" fill="url(#wood)"/>
    <path d="M1225 895L1390 822 1393 845 1240 912z" fill="#84401f"/>
    <path d="M1240 912L1393 845V938L1287 990V955z" fill="#e6eeee"/>
    <path d="M1290 930L1350 895 1390 935 1287 972z" fill="#b2bcae"/>
    <path d="M1255 915L1300 905 1300 925 1275 935z" fill="#77797b"/>
    <path d="M1303 885V970M1345 865V945M1388 845V935M1250 912L1388 850M1290 970L1388 925" stroke="#0a1218" stroke-width="1.500"/><path d="M1290 905L1286 930M1330 885L1323 915M1385 870V905" stroke="#0f4a78" stroke-width="2"/>
    <path d="M1287 975L1400 930 1430 955 1290 1012z" fill="#fdfdfd"/>
    <path d="M1358 793L1462 870V1003L1393 940V822z" fill="url(#wood)"/>
    <path d="M1288 1010L1456 945V978L1290 1048z" fill="url(#rail)"/><path d="M1290 1052L1455 985" stroke="#e8e8e8" stroke-width="2"/>
    <path d="M1390 935V970" stroke="#222" stroke-width="3"/>
    <path d="M1017 768L1150 868V960L1017 858z" fill="#0a0c0d"/>
    <path d="M1023 778L1050 798V872L1023 852zM1056 803L1081 822V895L1056 877zM1087 827L1112 846V918L1087 900zM1118 850L1144 870V945L1118 925z" fill="#a6b8b4"/>
    <path d="M1105 850L1140 880M1115 860L1125 905M1130 870L1135 900" stroke="#0f2a3a" stroke-width="2"/>
    <path d="M1277 730V848" stroke="#444" stroke-width="4"/><path d="M1277 730V848" stroke="#8a8a8a" stroke-width="2"/><path d="M1148 765L1156 785 1158 808 1148 815 1140 800 1142 780z" fill="#6b6c6e"/>
    <path d="M1096 940V960M1162 992V1012M1229 1040V1060" stroke="#fff" stroke-width="3"/>
    <!-- solar panels -->
    <g fill="#ececec" stroke="#0b0d06" stroke-width="1.500"><path d="M42 914h60v36H42zM115 918h60v34h-60zM186 923h58v32h-58zM258 928h59v34h-59zM42 955h60v33H42zM115 957h60v34h-60zM186 962h58v31h-58zM258 967h59v33h-59zM44 994h60v33H44zM115 996h60v34h-60zM186 1002h58v31h-58zM258 1006h59v33h-59z"/><path d="M42 947h60M42 984h60M115 948h60M186 950h58M258 957h59M115 987h60M186 989h58M258 996h59M44 1023h60M115 1026h60M186 1029h58M258 1035h59" stroke-width="2"/></g>
  </g>
</svg>
<svg class="cube" width="186" height="150" viewBox="84 85 558 450" aria-label="View cube" role="img">
  <g fill="none" stroke="#a6a6a6" stroke-width="3" stroke-dasharray="9 3"><ellipse cx="368" cy="350" rx="262" ry="158"/><ellipse cx="368" cy="347" rx="202" ry="115"/></g>
  <path d="M215 320L350 425 520 335 490 300z" fill="#dcdcdc"/><path d="M235 318L350 405 495 335z" fill="#bdbdbd"/>
  <path d="M229 143L382 90 508 160 347 224z" fill="#fdfdfd"/><path d="M229 143L347 224 349 395 238 303z" fill="#efefef"/><path d="M347 224L508 160 500 323 349 395z" fill="#ececec"/>
  <path d="M237 270L349 350V395L238 303zM349 345L502 290 500 323 349 395z" fill="#d6d8d8"/>
  <path d="M229 143L382 90 508 160 347 224zM229 143L238 303 349 395 500 323 508 160M347 224L349 395" fill="none" stroke="#8c8c8c" stroke-width="3"/>
  <g fill="#8a9299" font-weight="600" text-anchor="middle"><text font-size="38" transform="translate(368 165) rotate(-16)">TOP</text><text font-size="34" transform="translate(290 280) skewY(34)">LEFT</text><text font-size="42" transform="translate(430 293) skewY(-24)">FRONT</text></g>
  <g fill="#e2e2e2" stroke="#9a9a9a" stroke-width="3" font-weight="800" text-anchor="middle"><text x="134" y="350" font-size="64" font-style="italic">W</text><text x="606" y="350" font-size="64" font-style="italic">E</text><text x="370" y="520" font-size="76">S</text></g>
</svg>
<svg class="navbox" width="64" height="218" viewBox="0 0 64 218" role="img" aria-label="Navigation bar"><rect x="1" y="1" width="62" height="216" rx="5" fill="#fdfdfd" stroke="#b7b7b7" stroke-width="2"/><g fill="none" stroke="#b0b0b0" stroke-width="3"><circle cx="51" cy="12" r="6.500"/><circle cx="51" cy="205" r="6.500"/></g><path d="M49 10l4 4M53 10l-4 4M47 205h8" stroke="#b0b0b0" stroke-width="2"/><path d="M32 34h18q3 0 3 3v18A21 21 0 1 1 32 34z" fill="#ececec" stroke="#90969b" stroke-width="2.400"/><circle cx="32" cy="55" r="11.500" fill="#fdfdfd" stroke="#90969b" stroke-width="2.400"/><path d="M24 63l-7 6M40 63l8 6" stroke="#90969b" stroke-width="2"/><path d="M27 93h10l-5 6zM27 177h10l-5 6z" fill="#8c8f92"/><path d="M5 108.500h54" stroke="#c8c8c8"/><path d="M16 127h16v4H16z" fill="#949698"/><circle cx="35" cy="145" r="7" fill="#eef6fa" stroke="#8c8f92" stroke-width="2.200"/><path d="M40 150l6 6" stroke="#8c8f92" stroke-width="3.600"/></svg>
        </div>
        <div class="vbar d-flex flex-column justify-content-between align-items-center">
          <span class="d-flex align-items-center justify-content-center w-100 border-bottom" style="height:38px"><svg class="mt-2" width="12" height="10" viewBox="0 0 12 10"><path d="M1 8l5-6 5 6" fill="none" stroke="#777" stroke-width="2.400"/></svg></span>
          <div class="thumb w-100" style="height:34px;margin-bottom:298px"></div>
          <svg width="12" height="10" viewBox="0 0 12 10"><path d="M1 2l5 6 5-6" fill="none" stroke="#777" stroke-width="2.400"/></svg>
        </div>
      </div>
      <div class="vctl d-flex align-items-center">
        <span class="scale">1 : 100</span>
        <div class="d-flex align-items-center" style="gap:10px">
          <svg width="32" height="30" viewBox="0 0 32 30"><path d="M0 1h32v28H0z" fill="#59606a"/><path d="M2 5h28v20H2z" fill="#fff"/><path d="M9 5h8v6H9zM22 5h8v6h-8zM2 11h7v7H2zM17 11h6v7h-6zM9 18h8v7H9zM23 18h7v7h-7z" fill="#7d848c"/></svg>
          <svg width="32" height="30" viewBox="0 0 32 30"><path d="M2 12L10 3h20v17l-8 8H2z" fill="#8fd0f5" stroke="#2a5f98" stroke-width="2"/><path d="M2 12h20v16M22 12l8-9" fill="none" stroke="#2a5f98" stroke-width="2"/></svg>
          <svg width="32" height="30" viewBox="0 0 32 30"><path d="M12 0v26M0 13h24M4 4l17 18M21 4L4 22" stroke="#c98321" stroke-width="2"/><circle cx="12" cy="13" r="7.500" fill="#fbd468" stroke="#d0902c"/><path d="M17 15l13 13M30 15L17 28" stroke="#b92c22" stroke-width="4.500"/></svg>
          <svg width="32" height="30" viewBox="0 0 32 30"><path d="M3 23h20v5H3z" fill="#777"/><circle cx="14" cy="12" r="10" fill="#b9dcf6" stroke="#4a76a8" stroke-width="2"/><path d="M17 15l11 13M28 15L17 28" stroke="#b92c22" stroke-width="4.500"/></svg>
          <svg width="32" height="30" viewBox="0 0 32 30"><path d="M1 8l6 2 5-4h10l5 6-3 12H8L5 14z" fill="#dfe2e4" stroke="#666d75" stroke-width="2"/><path d="M14 6V2h5v4" fill="none" stroke="#666d75" stroke-width="2"/><rect x="22" y="12" width="8" height="12" rx="4" fill="#dcefff" stroke="#2f7fd0" stroke-width="2"/><path d="M24 26h5v4h-5z" fill="#666"/></svg>
          <svg width="32" height="30" viewBox="0 0 32 30"><path d="M0 22h8" stroke="#555" stroke-width="3" fill="none"/><path d="M18 2h9v5h-9z" fill="#777"/><path d="M8 28V9h22v8" fill="none" stroke="#2163a8" stroke-width="6"/><path d="M14 28V15h8" fill="none" stroke="#444" stroke-width="2"/><path d="M17 15l14 14M31 15L17 29" stroke="#c43428" stroke-width="5"/></svg>
          <svg width="32" height="30" viewBox="0 0 32 30"><path d="M0 22h8" stroke="#555" stroke-width="3"/><path d="M18 2h9v5h-9z" fill="#777"/><path d="M8 28V9h17" fill="none" stroke="#2163a8" stroke-width="6"/><path d="M14 28V15h8" fill="none" stroke="#444" stroke-width="2"/><path d="M14 21h6" stroke="#d03030" stroke-width="3"/><rect x="21" y="4" width="9" height="14" rx="4" fill="#e4f3ff" stroke="#2f7fd0" stroke-width="2"/><path d="M23 20h5v8h-5z" fill="#777"/></svg>
          <svg width="32" height="32" viewBox="0 0 32 32"><path d="M2 13L8 4l9-3 7 4 6 9v14l-10 2-18-6z" fill="#e7e9ea" stroke="#4b5058" stroke-width="2.400"/><path d="M2 13l6-9 9 11v14" fill="none" stroke="#4b5058" stroke-width="2"/><path d="M6 17l5 2v9l-5-2z" fill="#8b9096"/><rect x="17" y="20" width="14" height="11" fill="#d2e3e3" stroke="#3f6064" stroke-width="2.400"/><path d="M20 20v-5h7" fill="none" stroke="#3f6064" stroke-width="2.400"/></svg>
          <svg width="32" height="30" viewBox="0 0 32 30"><path d="M1 8q4 0 5 6l4 5M14 6q3-4 6-1 6-1 10 5l-2 6" fill="none" stroke="#555c63" stroke-width="2.600"/><path d="M8 18l10-2q2 7-4 8-6 0-6-6zM19 15l9-4q2 7-3 9-5 1-6-5z" fill="#d9ecf7" stroke="#555c63" stroke-width="2.200"/></svg>
          <svg width="32" height="30" viewBox="0 0 32 30"><rect x="11" y="4" width="11" height="15" rx="5" fill="#cfe8ff" stroke="#2f7fd0" stroke-width="2.400"/><path d="M14 20h6v8h-6z" fill="#777"/></svg>
          <svg width="32" height="30" viewBox="0 0 32 30"><path d="M2 6h28v8M3 6v20h12" fill="none" stroke="#222" stroke-width="3"/><path d="M7 2v6M13 2v6M19 2v6M25 2v6M1 12h4M1 18h4M7 24v5" stroke="#222" stroke-width="2"/><path d="M19 14h-3v4M27 14h4v4M16 24v4h4M31 24v4h-4" fill="none" stroke="#222" stroke-width="2.400"/><circle cx="23.500" cy="21" r="3.500" fill="none" stroke="#222" stroke-width="2.400"/></svg>
          <svg width="32" height="30" viewBox="0 0 32 30"><path d="M2 8l8-6h14v20M2 8h18v20M2 8v20M11 2v26M2 15h18M15 8v20" fill="none" stroke="#4b5058" stroke-width="2"/><path d="M4 17h14M7 17v11M15 17v11" stroke="#c8342a" stroke-width="3"/><rect x="21" y="6" width="10" height="13" rx="5" fill="#ffd27a" stroke="#e08a1a" stroke-width="2"/><path d="M24 20h5v8h-5z" fill="#888"/></svg>
          <svg width="32" height="30" viewBox="0 0 32 30"><path d="M7 13h15v15H7zM11 7l4-5h11l-4 5z" fill="#d9dbdc" stroke="#555c63" stroke-width="2.400"/><path d="M1 12h3v12H1zM25 11l5-4v14l-5 4z" fill="#9da0a3" stroke="#555c63" stroke-width="2.400"/></svg>
          <svg width="32" height="30" viewBox="0 0 32 30"><path d="M1 1v28M30 1v12M1 7h29M4 4v6M27 4v6" stroke="#3b424b" stroke-width="2.200"/><path d="M3 24h14" stroke="#888" stroke-width="2" stroke-dasharray="3 2"/><rect x="18" y="18" width="13" height="10" rx="2" fill="#4b5058"/><path d="M21 18v-4h7v4" fill="none" stroke="#4b5058" stroke-width="2"/></svg>
        </div>
        <div class="flex-grow-1 d-flex align-items-center justify-content-between ms-3">
          <svg width="10" height="14" viewBox="0 0 10 14"><path d="M8 1L2 7l6 6" fill="none" stroke="#777" stroke-width="2.400"/></svg>
          <div class="thumb" style="width:34px;height:32px;margin-right:222px"></div>
          <svg width="10" height="14" viewBox="0 0 10 14"><path d="M2 1l6 6-6 6" fill="none" stroke="#777" stroke-width="2.400"/></svg>
        </div>
        <svg class="ms-4 mt-3" width="18" height="16" viewBox="0 0 18 16"><path d="M14 0h4v4h-4zM8 6h4v4H8zM14 6h4v4h-4zM2 12h4v4H2zM8 12h4v4H8zM14 12h4v4h-4z" fill="#bdbdbd"/></svg>
      </div>
    </div>
  </section>
</main>

<footer class="status d-flex align-items-center text-nowrap">
  <span class="ps-1 pt-1" style="width:752px">Click to select, TAB for alternates, CTRL adds, SHIFT unselects.</span>
  <span class="rule"></span>
  <svg class="ms-1" width="32" height="32" viewBox="0 0 32 32"><path d="M9 3l6-3 7 2v7l-6 3-7-2zM0 16l6-3 7 3v15H1zM14 17l7-5V31h-7zM22 15q4-7 8 0v16h-8z" fill="#a0a3a2"/><path d="M9 4l7 3 6-3M0 17l7 4 6-4M14 30V18l7-5M23 31V15" fill="none" stroke="#f0f0f0" stroke-width="1.500"/></svg>
  <select class="form-select flex-shrink-0 ms-2 me-2" style="width:406px" aria-label="Active workset"><option></option></select>
  <svg width="32" height="32" viewBox="0 0 32 32"><path d="M8 1h20v11H20l-3 6-1-6H8z" fill="#c6c7c7" stroke="#f0f0f0" stroke-width="2"/><path d="M0 31V26l5-3 2-8 6 4-2 4 4 8z" fill="#a0a3a2"/></svg>
  <span class="pt-2 ps-2" style="width:44px">:0</span>
  <svg width="32" height="32" viewBox="0 0 32 32"><rect x="1" y="1" width="30" height="30" rx="2" fill="#f8f9fa" stroke="#333a4c" stroke-width="2.400"/><path d="M1 3h30v4H1z" fill="#7f8aa0"/><path d="M5 10h5v5H5zM11 18h4v3h-4zM11 25h4v3h-4z" fill="#333a4c"/><path d="M13 13h14M17 19h11M17 26h11" stroke="#333a4c" stroke-width="2.400"/></svg>
  <svg class="ms-3 me-2" width="32" height="32" viewBox="0 0 32 32"><path d="M2 0h29v31H18l4-8-6-8v4L2 18z" fill="#a0a3a2"/><path d="M0 22h12v-6l9 8-9 8v-5H0z" fill="#a0a3a2" stroke="#f0f0f0"/></svg>
  <select class="form-select flex-shrink-0" style="width:406px" aria-label="Design option"><option>Main Model</option></select>
</footer>
<span class="grip"></span>

<svg class="pointer" width="28" height="40" viewBox="0 0 28 40"><path d="M1 1v33l7-7 6 12 4-2-5-11h12z" fill="#fff" stroke="#111" stroke-width="1.500"/></svg>
<script src="https://cdn.jsdelivr.net/npm/bootstrap@5.3.0/dist/js/bootstrap.bundle.min.js"></script>
</body>
</html>
